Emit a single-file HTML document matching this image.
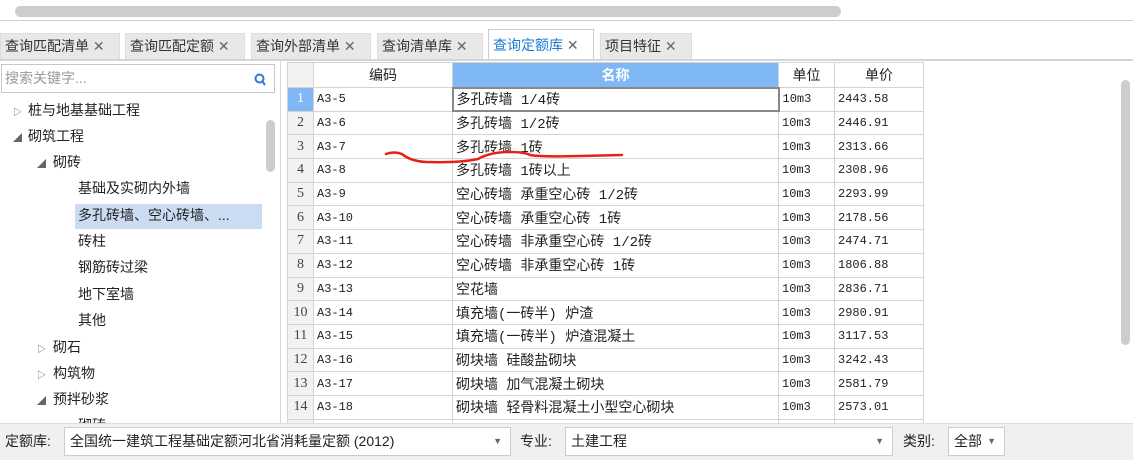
<!DOCTYPE html>
<html><head><meta charset="utf-8"><style>
*{margin:0;padding:0;box-sizing:border-box}
body{width:1133px;height:460px;overflow:hidden;background:#fff;font-family:"Liberation Sans","Noto Sans CJK SC",sans-serif;font-size:14px;color:#222;position:relative}
.abs{position:absolute}
.tab{position:absolute;top:33px;height:26px;background:#e8e8e8;border:1px solid #ddd;border-bottom:none;font-size:14px;line-height:24px;padding-left:4px;color:#333;white-space:nowrap}
.tab i{font-style:normal;color:#666}
.tab.act{background:#fff;color:#1e7bd8;top:29px;height:30px;line-height:30px;border-color:#ccc}
.tree{position:absolute;font-size:14px;white-space:nowrap;color:#222}
.arr{position:absolute;font-size:9px;color:#666}
table{border-collapse:collapse;position:absolute;left:287px;top:62px;table-layout:fixed;font-family:"Liberation Mono","Noto Sans CJK SC",monospace;font-size:12px}
td{border:1px solid #d4d4d4;height:23.7px;padding:0 3px;white-space:nowrap;overflow:hidden}
td.n{background:#f2f2f2;text-align:center;color:#444;font-family:"Liberation Serif",serif;font-size:14px;padding:0}
th{height:25px;font-weight:normal;font-size:14px;border:1px solid #d4d4d4;background:#fff;font-family:"Liberation Sans","Noto Sans CJK SC",sans-serif}
td.nm{font-size:14px}
.sel{position:absolute;height:29px;top:427px;background:#fff;border:1px solid #ccc;font-size:14px;line-height:27px;padding-left:5px}
.dd{position:absolute;right:8px;top:0;font-size:9px;color:#666}
.lab{position:absolute;top:427px;line-height:29px;font-size:14px}
</style></head><body>
<div class="abs" style="left:15px;top:6px;width:826px;height:11px;background:#cdcdcd;border-radius:6px"></div>
<div class="abs" style="left:0;top:20px;width:1133px;height:1px;background:#d0d0d0"></div>
<div class="tab" style="left:0;width:120px">查询匹配清单 <i>✕</i></div>
<div class="tab" style="left:125px;width:120px">查询匹配定额 <i>✕</i></div>
<div class="tab" style="left:251px;width:120px">查询外部清单 <i>✕</i></div>
<div class="tab" style="left:377px;width:106px">查询清单库 <i>✕</i></div>
<div class="tab act" style="left:488px;width:106px">查询定额库 <i>✕</i></div>
<div class="tab" style="left:600px;width:92px">项目特征 <i>✕</i></div>
<div class="abs" style="left:0;top:59px;width:1133px;height:2px;background:#d5d5d5"></div>
<div class="abs" style="left:1px;top:64px;width:274px;height:29px;border:1px solid #c8c8c8;color:#999;line-height:27px;padding-left:3px">搜索关键字...<svg style="position:absolute;right:8px;top:8px" width="12" height="13"><circle cx="5.5" cy="5.5" r="4" stroke="#2b7bd3" stroke-width="2" fill="none"/><path d="M8 8 L11 12" stroke="#2b7bd3" stroke-width="2"/></svg></div>
<div class="abs" style="left:280px;top:61px;width:1px;height:362px;background:#d8d8d8"></div>
<div class="abs" style="left:266px;top:120px;width:9px;height:52px;background:#cdcdcd;border-radius:5px"></div>
<div class="abs" style="left:75px;top:204px;width:187px;height:25px;background:#cbdcf2"></div>
<span class="arr" style="left:13px;top:105px">▷</span><div class="tree" style="left:28px;top:100px">桩与地基基础工程</div>
<span class="arr" style="left:13px;top:131px">◢</span><div class="tree" style="left:28px;top:126px">砌筑工程</div>
<span class="arr" style="left:37px;top:157px">◢</span><div class="tree" style="left:53px;top:152px">砌砖</div>
<div class="tree" style="left:78px;top:178px">基础及实砌内外墙</div>
<div class="tree" style="left:78px;top:205px">多孔砖墙、空心砖墙、...</div>
<div class="tree" style="left:78px;top:231px">砖柱</div>
<div class="tree" style="left:78px;top:257px">钢筋砖过梁</div>
<div class="tree" style="left:78px;top:284px">地下室墙</div>
<div class="tree" style="left:78px;top:310px">其他</div>
<span class="arr" style="left:37px;top:342px">▷</span><div class="tree" style="left:53px;top:337px">砌石</div>
<span class="arr" style="left:37px;top:368px">▷</span><div class="tree" style="left:53px;top:363px">构筑物</div>
<span class="arr" style="left:37px;top:394px">◢</span><div class="tree" style="left:53px;top:389px">预拌砂浆</div>
<div class="tree" style="left:78px;top:415px">砌砖</div>
<table>
<colgroup><col style="width:26px"><col style="width:139px"><col style="width:326px"><col style="width:56px"><col style="width:89px"></colgroup>
<tr><th style="background:#f2f2f2"></th><th>编码</th><th style="background:#7fb8f5;color:#fff;font-weight:bold">名称</th><th>单位</th><th>单价</th></tr>
<tr><td class="n" style="background:#7fb8f5;color:#fff">1</td><td>A3-5</td><td class="nm" style="border:2px solid #888">多孔砖墙 1/4砖</td><td>10m3</td><td>2443.58</td></tr>
<tr><td class="n">2</td><td>A3-6</td><td class="nm">多孔砖墙 1/2砖</td><td>10m3</td><td>2446.91</td></tr>
<tr><td class="n">3</td><td>A3-7</td><td class="nm">多孔砖墙 1砖</td><td>10m3</td><td>2313.66</td></tr>
<tr><td class="n">4</td><td>A3-8</td><td class="nm">多孔砖墙 1砖以上</td><td>10m3</td><td>2308.96</td></tr>
<tr><td class="n">5</td><td>A3-9</td><td class="nm">空心砖墙 承重空心砖 1/2砖</td><td>10m3</td><td>2293.99</td></tr>
<tr><td class="n">6</td><td>A3-10</td><td class="nm">空心砖墙 承重空心砖 1砖</td><td>10m3</td><td>2178.56</td></tr>
<tr><td class="n">7</td><td>A3-11</td><td class="nm">空心砖墙 非承重空心砖 1/2砖</td><td>10m3</td><td>2474.71</td></tr>
<tr><td class="n">8</td><td>A3-12</td><td class="nm">空心砖墙 非承重空心砖 1砖</td><td>10m3</td><td>1806.88</td></tr>
<tr><td class="n">9</td><td>A3-13</td><td class="nm">空花墙</td><td>10m3</td><td>2836.71</td></tr>
<tr><td class="n">10</td><td>A3-14</td><td class="nm">填充墙(一砖半) 炉渣</td><td>10m3</td><td>2980.91</td></tr>
<tr><td class="n">11</td><td>A3-15</td><td class="nm">填充墙(一砖半) 炉渣混凝土</td><td>10m3</td><td>3117.53</td></tr>
<tr><td class="n">12</td><td>A3-16</td><td class="nm">砌块墙 硅酸盐砌块</td><td>10m3</td><td>3242.43</td></tr>
<tr><td class="n">13</td><td>A3-17</td><td class="nm">砌块墙 加气混凝土砌块</td><td>10m3</td><td>2581.79</td></tr>
<tr><td class="n">14</td><td>A3-18</td><td class="nm">砌块墙 轻骨料混凝土小型空心砌块</td><td>10m3</td><td>2573.01</td></tr>
<tr><td class="n"></td><td></td><td></td><td></td><td></td></tr>
</table>
<svg class="abs" style="left:380px;top:145px" width="250" height="25"><path d="M6 9 Q14 6 22 9 Q30 16 46 17 Q80 18 98 14 Q110 7 130 7 Q145 7 150 10 Q160 12 200 11 L242 10" stroke="#e8201c" stroke-width="2.5" fill="none" stroke-linecap="round"/></svg>
<div class="abs" style="left:1121px;top:80px;width:9px;height:265px;background:#cdcdcd;border-radius:5px"></div>
<div class="abs" style="left:0;top:423px;width:1133px;height:37px;background:#f0f0f0;border-top:1px solid #ddd"></div>
<div class="lab" style="left:5px">定额库:</div>
<div class="sel" style="left:64px;width:447px">全国统一建筑工程基础定额河北省消耗量定额 (2012)<span class="dd">▼</span></div>
<div class="lab" style="left:520px">专业:</div>
<div class="sel" style="left:565px;width:328px">土建工程<span class="dd">▼</span></div>
<div class="lab" style="left:903px">类别:</div>
<div class="sel" style="left:948px;width:57px">全部<span class="dd">▼</span></div>
</body></html>
